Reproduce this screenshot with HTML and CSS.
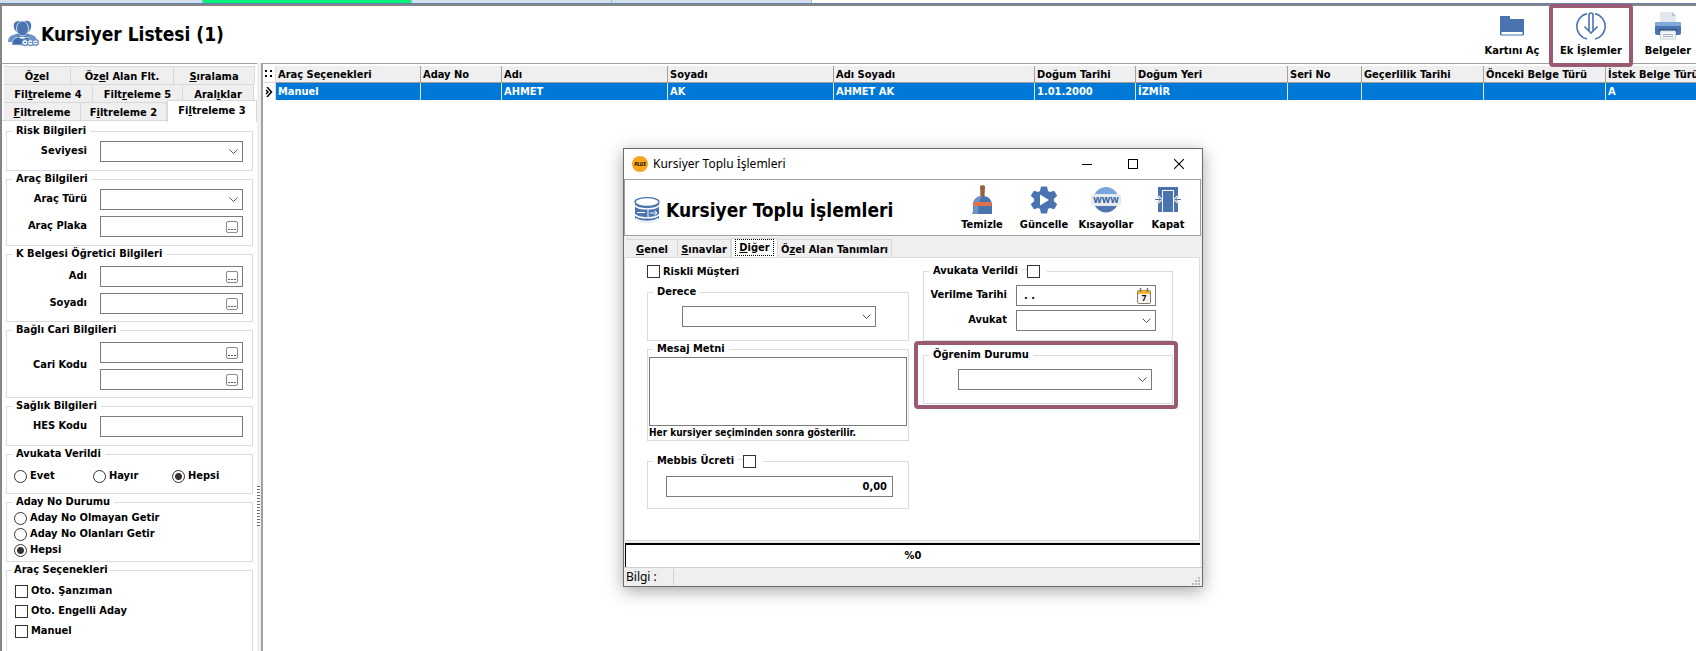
FILE: index.html
```
<!DOCTYPE html>
<html lang="tr">
<head>
    <meta charset="UTF-8">
    <meta name="viewport" content="width=device-width, initial-scale=1.0">
    <title>Kursiyer Listesi</title>
    <link rel="stylesheet" href="styles.css">
</head>
<body>
    <div class="page-tabs">
        <span class="page-tab first"></span>
        <span class="page-tab active"></span>
        <span class="page-tab"></span>
        <span class="page-tab"></span>
    </div>

    <header class="topbar">
        <svg class="title-icon" width="32" height="28" viewBox="0 0 32 28">
            <path d="M7 4C8 1 12 0 15 2C18 0 23 0 24 4C25 9 22 12 20 13L25 17H6L11 13C8 11 6 8 7 4Z" fill="#4a74b0"/>
            <path d="M1 22C1 17 4 15 9 14L12 17L8 22ZM30 20C29 16 26 15 22 14L19 17L24 20Z" fill="#6f93c6"/>
            <ellipse cx="15.500" cy="8.500" rx="6" ry="7.500" fill="#4a74b0" stroke="#d7e2f1"/>
            <path d="M5 25C5 19 8 18 12 17C14 19 17 19 19 17C22 18 25 19 25 21L15 25Z" fill="#3f6bab" stroke="#d7e2f1" stroke-width=".7"/>
            <g fill="#fff" stroke="#6f93c6" stroke-width="1.400"><circle cx="18" cy="22.500" r="3"/><circle cx="23.500" cy="22.500" r="3"/><circle cx="28.500" cy="22.500" r="2.800"/></g>
            <path d="M17 22.500H19M22.500 22.500H24.500M27.500 22.500H29.500" stroke="#3f6bab"/>
        </svg>
        <h1>Kursiyer Listesi (1)</h1>
        <nav class="actions">
            <button class="action">
                <svg width="32" height="30" viewBox="0 0 32 30">
                    <path d="M4 5H14V8H28V24H4Z" fill="#4a74b0"/>
                    <path d="M5 20.500H27V24H5Z" fill="#fff" stroke="#4a74b0"/>
                </svg>
                Kartını Aç
            </button>
            <button class="action marked">
                <svg width="32" height="30" viewBox="0 0 32 30" fill="none" stroke="#4a74b0" stroke-width="1.600">
                    <path d="M12 2.600A13 13 0 0 0 12 28M20 2.600A13 13 0 0 1 20 28"/>
                    <path d="M14 20V4Q14 2 16 2Q18 2 18 4V20M9.500 15.500L16 22L22.500 15.500"/>
                </svg>
                Ek İşlemler
            </button>
            <button class="action">
                <svg width="32" height="30" viewBox="0 0 32 30">
                    <path d="M8 1H20L24 5V13H8Z" fill="#e2e7ee"/><path d="M20 1V5H24Z" fill="#b9c3d0"/>
                    <rect x="3" y="11" width="26" height="13" rx="2" fill="#4a74b0"/>
                    <path d="M3 13a2 2 0 0 1 2-2H27a2 2 0 0 1 2 2V15H3Z" fill="#82a7da"/>
                    <rect x="7" y="18" width="18" height="3" fill="#2d5288"/>
                    <path d="M8.500 20H23.500V28H8.500Z" fill="#f2f4f7" stroke="#ccd3dc"/>
                    <path d="M11 23.500H21M11 25.500H21" stroke="#aab4c0"/>
                </svg>
                Belgeler
            </button>
        </nav>
    </header>

    <main class="workspace">
        <aside class="filters">
            <div class="tab-rows" role="tablist">
                <div class="tab-row">
                    <button class="tab w-66">Ö<u>z</u>el</button>
                    <button class="tab w-103">Öz<u>e</u>l Alan Flt.</button>
                    <button class="tab w-81"><u>S</u>ıralama</button>
                </div>
                <div class="tab-row">
                    <button class="tab w-89">Fil<u>t</u>releme 4</button>
                    <button class="tab w-90">Filt<u>r</u>eleme 5</button>
                    <button class="tab w-71">Aral<u>ı</u>klar</button>
                </div>
                <div class="tab-row">
                    <button class="tab w-77"><u>F</u>iltreleme</button>
                    <button class="tab w-86">F<u>i</u>ltreleme 2</button>
                    <button class="tab w-90 current">Fi<u>l</u>treleme 3</button>
                </div>
            </div>

            <form class="filter-form">
                <fieldset class="group">
                    <legend>Risk Bilgileri</legend>
                    <div class="fields">
                        <label for="seviye">Seviyesi</label>
                        <select id="seviye" class="box"></select>
                    </div>
                </fieldset>
                <fieldset class="group">
                    <legend>Araç Bilgileri</legend>
                    <div class="fields">
                        <label for="arac-turu">Araç Türü</label>
                        <select id="arac-turu" class="box"></select>
                        <label for="plaka">Araç Plaka</label>
                        <div class="box lookup"><input id="plaka" type="text"><button type="button" aria-label="Seç"></button></div>
                    </div>
                </fieldset>
                <fieldset class="group roomy">
                    <legend>K Belgesi Öğretici Bilgileri</legend>
                    <div class="fields">
                        <label for="adi">Adı</label>
                        <div class="box lookup"><input id="adi" type="text"><button type="button" aria-label="Seç"></button></div>
                        <label for="soyadi">Soyadı</label>
                        <div class="box lookup"><input id="soyadi" type="text"><button type="button" aria-label="Seç"></button></div>
                    </div>
                </fieldset>
                <fieldset class="group roomy">
                    <legend>Bağlı Cari Bilgileri</legend>
                    <div class="fields">
                        <label for="cari" class="span-rows">Cari Kodu</label>
                        <div class="box lookup"><input id="cari" type="text"><button type="button" aria-label="Seç"></button></div>
                        <div class="box lookup"><input type="text" aria-label="Cari Adı"><button type="button" aria-label="Seç"></button></div>
                    </div>
                </fieldset>
                <fieldset class="group">
                    <legend>Sağlık Bilgileri</legend>
                    <div class="fields">
                        <label for="hes">HES Kodu</label>
                        <input id="hes" class="box" type="text">
                    </div>
                </fieldset>
                <fieldset class="group">
                    <legend>Avukata Verildi</legend>
                    <div class="radio-row">
                        <label><input type="radio" name="avukat">Evet</label>
                        <label><input type="radio" name="avukat">Hayır</label>
                        <label><input type="radio" name="avukat" checked>Hepsi</label>
                    </div>
                </fieldset>
                <fieldset class="group status">
                    <legend>Aday No Durumu</legend>
                    <div class="radio-list">
                        <label><input type="radio" name="aday">Aday No Olmayan Getir</label>
                        <label><input type="radio" name="aday">Aday No Olanları Getir</label>
                        <label><input type="radio" name="aday" checked>Hepsi</label>
                    </div>
                </fieldset>
                <fieldset class="group last">
                    <legend>Araç Seçenekleri</legend>
                    <div class="check-list">
                        <label><input type="checkbox">Oto. Şanzıman</label>
                        <label><input type="checkbox">Oto. Engelli Aday</label>
                        <label><input type="checkbox">Manuel</label>
                    </div>
                </fieldset>
            </form>
        </aside>

        <div class="splitter"><span class="grip"></span></div>

        <section class="grid-area">
            <table class="grid">
                <colgroup>
                    <col class="c-mark"><col class="c-145"><col class="c-81"><col class="c-166"><col class="c-166"><col class="c-201">
                    <col class="c-101"><col class="c-152"><col class="c-74"><col class="c-122"><col class="c-122"><col class="c-122">
                </colgroup>
                <thead>
                    <tr>
                        <th class="mark">
                            <svg width="8" height="8" viewBox="0 0 8 8"><path d="M0 0h2v2H0zM5 0h2v2H5zM0 5h2v2H0zM5 5h2v2H5z"/></svg>
                        </th>
                        <th>Araç Seçenekleri</th>
                        <th>Aday No</th>
                        <th>Adı</th>
                        <th>Soyadı</th>
                        <th>Adı Soyadı</th>
                        <th>Doğum Tarihi</th>
                        <th>Doğum Yeri</th>
                        <th>Seri No</th>
                        <th>Geçerlilik Tarihi</th>
                        <th>Önceki Belge Türü</th>
                        <th>İstek Belge Türü</th>
                    </tr>
                </thead>
                <tbody>
                    <tr>
                        <td class="mark">
                            <svg width="8" height="10" viewBox="0 0 8 10" fill="none" stroke="#000" stroke-width="1.500"><path d="M2 0L6.500 5L2 10M1 3L3 5L1 7"/></svg>
                        </td>
                        <td>Manuel</td>
                        <td></td>
                        <td>AHMET</td>
                        <td>AK</td>
                        <td>AHMET AK</td>
                        <td>1.01.2000</td>
                        <td>İZMİR</td>
                        <td></td>
                        <td></td>
                        <td></td>
                        <td>A</td>
                    </tr>
                </tbody>
            </table>
        </section>
    </main>

    <div class="dialog" role="dialog" aria-labelledby="dialog-title">
        <div class="titlebar">
            <svg width="16" height="16" viewBox="0 0 16 16">
                <circle cx="8" cy="8" r="8" fill="#f9a61c"/>
                <text x="8" y="10" text-anchor="middle" class="logo-text">PLUS</text>
            </svg>
            <span id="dialog-title">Kursiyer Toplu İşlemleri</span>
            <div class="window-buttons">
                <button aria-label="Küçült"><svg width="10" height="10" viewBox="0 0 10 10"><path d="M0 5.500H10" stroke="#000"/></svg></button>
                <button aria-label="Büyüt"><svg width="10" height="10" viewBox="0 0 10 10"><rect x=".5" y=".5" width="9" height="9" fill="none" stroke="#000"/></svg></button>
                <button aria-label="Kapat"><svg width="10" height="10" viewBox="0 0 10 10"><path d="M0 0L10 10M10 0L0 10" stroke="#000" stroke-width="1.100"/></svg></button>
            </div>
        </div>

        <div class="dialog-head">
            <svg width="26" height="26" viewBox="0 0 26 26">
                <path d="M1 5V20C1 27 25 27 25 20V5Z" fill="#4a74b0"/>
                <ellipse cx="13" cy="5" rx="12" ry="4.300" fill="#fff" stroke="#4a74b0" stroke-width="1.300"/>
                <path d="M1 8.500C4 13 22 13 25 8.500M1 17.500C4 22 22 22 25 17.500M2 21.500C6 25.500 20 25.500 24 21.500" fill="none" stroke="#fff" stroke-width="1.400"/>
                <path d="M3 15.500H11M14 12V20M16 16H23M20.500 13.500L23 16L20.500 18.500" fill="none" stroke="#fff"/>
            </svg>
            <h2>Kursiyer Toplu İşlemleri</h2>
            <nav class="dialog-actions">
                <button class="action">
                    <svg width="28" height="30" viewBox="0 0 28 30">
                        <path d="M12 1.500C12-.3 17-.3 17 1.500L16.500 12H12.500Z" fill="#95613f"/>
                        <path d="M5 21C5 14 9 11 14.500 11S24 14 24 21V29H5L4 29C6 26 5 24 5 21Z" fill="#4a74b0"/>
                        <path d="M5 21C5 14 9 11 14.500 11C10 15 11 22 10 29H4C6 26 5 24 5 21Z" fill="#6f93c3"/>
                        <path d="M5.500 17H23.500V21H5.500Z" fill="#e5714a"/>
                    </svg>
                    Temizle
                </button>
                <button class="action">
                    <svg width="28" height="30" viewBox="0 0 28 30">
                        <g transform="translate(14 15)" fill="#4a74b0">
                            <circle r="10"/>
                            <path d="M-4-9L-3-13.500H3L4-9V9L3 13.500H-3L-4 9Z"/>
                            <path d="M-4-9L-3-13.500H3L4-9V9L3 13.500H-3L-4 9Z" transform="rotate(60)"/>
                            <path d="M-4-9L-3-13.500H3L4-9V9L3 13.500H-3L-4 9Z" transform="rotate(120)"/>
                            <path d="M-4-5.500L5 0L-4 5.500Z" fill="#fff"/>
                        </g>
                    </svg>
                    Güncelle
                </button>
                <button class="action">
                    <svg width="32" height="30" viewBox="0 0 32 30">
                        <circle cx="16" cy="15" r="12.500" fill="#4f76ae"/>
                        <path d="M4 11A12.500 12.500 0 0 1 28 11Z" fill="#79a5dd"/>
                        <rect x="1" y="9" width="30" height="12" rx="3" fill="#e6eaef"/>
                        <text x="16" y="18" text-anchor="middle" class="www">www</text>
                    </svg>
                    Kısayollar
                </button>
                <button class="action">
                    <svg width="28" height="30" viewBox="0 0 28 30">
                        <path d="M4 2H24V27H4Z" fill="#4a74b0"/>
                        <path d="M8.500 27V5.500H19.500V27" fill="none" stroke="#fff"/>
                        <path d="M1 14.500H7M4 11.500L7 14.500L4 17.500M27 14.500H21M24 11.500L21 14.500L24 17.500" fill="none" stroke="#fff" stroke-width="2.600"/>
                        <path d="M1 14.500H7M4 11.500L7 14.500L4 17.500M27 14.500H21M24 11.500L21 14.500L24 17.500" fill="none" stroke="#4a74b0"/>
                    </svg>
                    Kapat
                </button>
            </nav>
        </div>

        <div class="dialog-tabs" role="tablist">
            <button class="tab w-51"><u>G</u>enel</button>
            <button class="tab w-53"><u>S</u>ınavlar</button>
            <button class="tab w-47 current"><span class="focus"><u>D</u>iğer</span></button>
            <button class="tab w-114">Ö<u>z</u>el Alan Tanımları</button>
        </div>

        <form class="dialog-body">
            <div class="column">
                <label class="risk"><input type="checkbox">Riskli Müşteri</label>
                <fieldset class="group degree">
                    <legend>Derece</legend>
                    <select class="box" aria-label="Derece"></select>
                </fieldset>
                <fieldset class="group message">
                    <legend>Mesaj Metni</legend>
                    <textarea aria-label="Mesaj Metni"></textarea>
                    <p>Her kursiyer seçiminden sonra gösterilir.</p>
                </fieldset>
                <fieldset class="group fee">
                    <legend class="with-check"><label for="mebbis">Mebbis Ücreti</label><input id="mebbis" type="checkbox"></legend>
                    <input class="box amount" type="text" value="0,00" aria-label="Mebbis Ücreti">
                </fieldset>
            </div>
            <div class="column">
                <fieldset class="group lawyer">
                    <legend class="with-check"><label for="verildi">Avukata Verildi</label><input id="verildi" type="checkbox"></legend>
                    <div class="fields">
                        <label for="tarih">Verilme Tarihi</label>
                        <div class="box date">
                            <input id="tarih" type="text" value=". .">
                            <svg width="14" height="16" viewBox="0 0 14 16">
                                <rect x=".5" y="2.500" width="13" height="13" rx="1" fill="#f4f4f4" stroke="#8a7a6a"/>
                                <path d="M1 2.500H13V6H1Z" fill="#f5b921"/>
                                <path d="M3.500 0V4M10.500 0V4" stroke="#777" stroke-width="1.500"/>
                                <text x="7" y="13" text-anchor="middle" class="day">7</text>
                            </svg>
                        </div>
                        <label for="avukat-sec">Avukat</label>
                        <select id="avukat-sec" class="box"></select>
                    </div>
                </fieldset>
                <div class="highlight">
                    <fieldset class="group degree">
                        <legend>Öğrenim Durumu</legend>
                        <select class="box" aria-label="Öğrenim Durumu"></select>
                    </fieldset>
                </div>
            </div>
        </form>

        <div class="progress">%0</div>
        <footer class="statusbar">
            <span>Bilgi :</span>
            <svg width="8" height="8" viewBox="0 0 8 8" fill="#bbb"><path d="M6 0h2v2H6zM3 3h2v2H3zM6 3h2v2H6zM0 6h2v2H0zM3 6h2v2H3zM6 6h2v2H6z"/></svg>
        </footer>
    </div>
</body>
</html>
```
FILE: styles.css
```
* {
    margin: 0;
    padding: 0;
    box-sizing: border-box;
}

html, body {
    height: 100%;
    overflow: hidden;
}

body {
    display: flex;
    flex-direction: column;
    background: #fff;
    color: #000;
    font: bold 11px/16px "DejaVu Sans Condensed", "Noto Sans", sans-serif;
}

button, input, select, textarea {
    font: inherit;
    color: inherit;
    border-radius: 0;
}

button {
    background: none;
    border: none;
}

/* strip of open pages */
.page-tabs {
    display: flex;
    flex: none;
    height: 4px;
    background: linear-gradient(90deg, #d3deee 812px, #fff 812px);
    border-bottom: 1px solid #5f84b2;
}

.page-tab {
    width: 200px;
    border-right: 1px solid #a9bbd3;
}

.page-tab.first {
    width: 203px;
}

.page-tab.active {
    width: 209px;
    background: #00f57a;
}

.topbar {
    display: flex;
    align-items: center;
    flex: none;
    height: 59px;
    padding: 0 0 1px 5px;
    border-top: 2px solid #858585;
    border-left: 2px solid #858585;
}

h1, h2 {
    font-size: 19px;
    line-height: 24px;
}

.title-icon {
    margin-right: 2px;
}

.actions {
    display: flex;
    align-self: stretch;
    margin-left: auto;
}

.action {
    display: flex;
    flex-direction: column;
    align-items: center;
    gap: 2px;
    white-space: nowrap;
}

.actions .action {
    width: 74px;
    padding-top: 5px;
}

.actions .action.marked {
    position: relative;
    width: 84px;
}

.actions .action:last-child {
    width: 63px;
    padding-left: 7px;
}

.marked::after {
    content: "";
    position: absolute;
    inset: -2px 0 -5px 0;
    border: 4px solid #9b5a74;
    border-radius: 4px;
}

.workspace {
    display: flex;
    flex: 1;
    min-height: 0;
}

/* filter panel */
.filters {
    width: 257px;
    flex: none;
    padding-top: 2px;
    border-top: 1px solid #a0a0a0;
    border-left: 2px solid #858585;
}

.tab-rows {
    padding: 0 1px 0 2px;
}

.tab-row {
    display: flex;
    height: 18px;
}

.tab {
    flex: none;
    height: 18px;
    padding-top: 2px;
    background: #efefef;
    border: 1px solid #d9d9d9;
    border-width: 1px 1px 0 0;
    white-space: nowrap;
}

.tab.current {
    height: 22px;
    margin-top: -2px;
    padding: 0 0 2px;
    background: #fff;
    border-width: 1px;
    border-bottom: none;
}

.w-47 { width: 47px; }
.w-51 { width: 51px; }
.w-53 { width: 53px; }
.w-66 { width: 67px; }
.w-71 { width: 71px; }
.w-77 { width: 77px; }
.w-81 { width: 81px; }
.w-86 { width: 86px; }
.w-89 { width: 89px; }
.w-90 { width: 90px; }
.w-103 { width: 103px; }
.w-114 { width: 114px; }

.filter-form {
    margin-right: 1px;
    padding: 2px 0 0 4px;
    border-top: 1px solid #d9d9d9;
}

.filters .group {
    width: 247px;
}

.group {
    min-width: 0;
    border: 1px solid #dcdcdc;
    padding-bottom: 8px;
}

.group legend {
    margin-left: 5px;
    padding: 0 4px;
    white-space: nowrap;
}

.group.last legend {
    padding: 0 2px;
}

.fields {
    display: grid;
    grid-template-columns: 80px 143px;
    gap: 6px 13px;
    align-items: center;
    padding-top: 2px;
}

.group.roomy {
    padding-bottom: 7px;
}

.roomy .fields {
    padding-top: 4px;
}

.fields label {
    padding-bottom: 2px;
    text-align: right;
    white-space: nowrap;
}

.span-rows {
    grid-row: span 2;
}

.box {
    display: block;
    width: 100%;
    height: 21px;
    background: #fff;
    border: 1px solid #7a7a7a;
}

select.box {
    appearance: none;
    background: #fff url("data:image/svg+xml,%3Csvg xmlns='http://www.w3.org/2000/svg' width='9' height='6'%3E%3Cpath d='M.5 .5L4.500 4.500L8.500 .5' fill='none' stroke='%23555'/%3E%3C/svg%3E") no-repeat right 4px center;
}

.lookup, .date {
    display: flex;
    align-items: center;
    padding-right: 4px;
}

.lookup input, .date input {
    flex: 1;
    min-width: 0;
    border: none;
    outline: none;
}

.lookup button {
    width: 12px;
    height: 12px;
    border: 1px solid #8a8a8a;
    border-radius: 2px;
    background: repeating-linear-gradient(90deg, #555 0 2px, transparent 2px 3px) 1px 7px / 8px 1px no-repeat;
}

input[type="radio"], input[type="checkbox"] {
    appearance: none;
    flex: none;
    width: 13px;
    height: 13px;
    background: #fff;
    border: 1px solid #333;
}

input[type="radio"] {
    border-radius: 50%;
}

input[type="radio"]:checked {
    background: radial-gradient(circle, #333 3px, #fff 4px);
}

.radio-row label, .radio-list label, .check-list label, .risk {
    display: flex;
    align-items: center;
    gap: 3px;
}

.radio-row {
    display: grid;
    grid-template-columns: repeat(3, 79px);
    padding: 6px 0 1px 7px;
}

.radio-list {
    padding-left: 7px;
}

.status {
    padding-bottom: 3px;
}

.check-list {
    display: grid;
    gap: 4px;
    padding: 5px 0 16px 8px;
}

.splitter {
    flex: none;
    width: 6px;
    padding-top: 423px;
    background: #efefef;
    border-right: 2px solid #a0a0a0;
}

.grip {
    display: block;
    width: 3px;
    height: 40px;
    background: repeating-linear-gradient(#666 0 1px, #fff 1px 3px);
}

/* list */
.grid-area {
    flex: 1;
    min-width: 0;
    overflow: hidden;
    padding-top: 2px;
    border-top: 1px solid #a0a0a0;
}

.grid {
    width: 1465px;
    table-layout: fixed;
    border-collapse: separate;
    border-spacing: 0;
}

.c-mark { width: 13px; }
.c-74 { width: 74px; }
.c-81 { width: 81px; }
.c-101 { width: 101px; }
.c-122 { width: 122px; }
.c-145 { width: 145px; }
.c-152 { width: 152px; }
.c-166 { width: 166px; }
.c-201 { width: 201px; }

.grid th, .grid td {
    height: 17px;
    padding-left: 2px;
    text-align: left;
    line-height: 15px;
    white-space: nowrap;
}

.grid th {
    background: #efefef;
    border: solid #a0a0a0;
    border-width: 0 1px 1px 0;
}

.grid td {
    background: #0078d7;
    color: #fff;
    border-right: 1px solid #e6e6e6;
}

.grid .mark {
    background: #fff;
    border-color: #dcdcdc;
}

.mark svg {
    display: block;
}

/* dialog window */
.dialog {
    position: absolute;
    left: 623px;
    top: 148px;
    display: flex;
    flex-direction: column;
    width: 580px;
    background: #efefef;
    border: 1px solid #6b6b6b;
    box-shadow: 0 4px 16px rgba(0, 0, 0, .35);
}

.titlebar {
    display: flex;
    align-items: center;
    height: 30px;
    padding-left: 8px;
    background: #fff;
    font: 12px/16px "Noto Sans", "Open Sans", sans-serif;
}

.titlebar span {
    margin-left: 5px;
}

.logo-text {
    font: italic bold 5px "Noto Sans", sans-serif;
}

.www {
    font: bold 10px "Noto Sans", sans-serif;
    fill: #36639f;
}

.window-buttons {
    display: flex;
    margin-left: auto;
}

.window-buttons button {
    display: flex;
    align-items: center;
    justify-content: center;
    width: 46px;
    height: 30px;
}

.dialog-head {
    display: flex;
    align-items: center;
    height: 57px;
    margin-right: 1px;
    padding: 5px 1px 0 9px;
    background: #fff;
    border: 1px solid #a0a0a0;
}

.dialog-head h2 {
    margin-left: 6px;
}

.dialog-actions {
    display: flex;
    align-self: stretch;
    margin-left: auto;
}

.dialog-actions .action {
    width: 62px;
}

.dialog-tabs {
    display: flex;
    align-items: flex-end;
    height: 21px;
    padding-left: 3px;
}

.dialog-tabs .current {
    height: 20px;
    margin: 0 0 -1px;
    padding: 0 0 2px;
}

.focus {
    display: inline-block;
    padding: 0 3px;
    line-height: 15px;
    outline: 1px dotted #000;
}

.dialog-body {
    display: grid;
    grid-template-columns: 262px 264px;
    column-gap: 5px;
    margin-right: 2px;
    padding: 5px 0 31px 22px;
    background: #fff;
    border: 1px solid #dcdcdc;
}

.risk {
    height: 13px;
    margin: 2px 0 6px;
}

.degree {
    padding-bottom: 0;
}

.degree .box {
    width: 194px;
    margin: 6px 34px 13px;
}

.message {
    padding: 0 1px;
}

.group.message legend {
    margin-left: 4px;
}

textarea {
    display: block;
    width: 100%;
    height: 69px;
    border: 1px solid #7a7a7a;
    resize: none;
}

.message p {
    font-size: 10px;
    line-height: 14px;
}

.fee {
    margin-top: 12px;
    padding: 0;
}

.fee .box {
    width: 227px;
    margin: 7px 0 11px 18px;
    padding-right: 5px;
    text-align: right;
}

.group .with-check {
    display: flex;
    align-items: center;
    padding-right: 7px;
}

/* bit of the frame line between caption and tick box */
.with-check label::after {
    content: "";
    display: inline-block;
    width: 5px;
    height: 1px;
    margin-left: 4px;
    vertical-align: 4px;
    background: #dcdcdc;
}

.lawyer {
    margin-left: 9px;
    width: 250px;
    padding-bottom: 9px;
}

.lawyer .fields {
    grid-template-columns: 83px 140px;
    column-gap: 9px;
    row-gap: 4px;
    padding-top: 6px;
}

.date input {
    padding-left: 7px;
}

.day {
    font: bold 8px "Noto Sans", sans-serif;
}

/* frame drawn round the group that matters here */
.highlight {
    border: 4px solid #9b5a74;
    border-radius: 4px;
    padding: 2px 1px 1px 5px;
}

.progress {
    height: 24px;
    margin: 2px 2px 0 1px;
    background: #fff;
    border: solid #000;
    border-width: 2px 0 0 1px;
    text-align: center;
    line-height: 22px;
}

.statusbar {
    display: flex;
    align-items: flex-end;
    justify-content: space-between;
    height: 19px;
    padding: 0 2px 1px 2px;
    border-top: 1px solid #d0d0d0;
    font: 12px/16px "Noto Sans", "Open Sans", sans-serif;
}

.statusbar span {
    width: 48px;
    border-right: 1px solid #d0d0d0;
}
```
